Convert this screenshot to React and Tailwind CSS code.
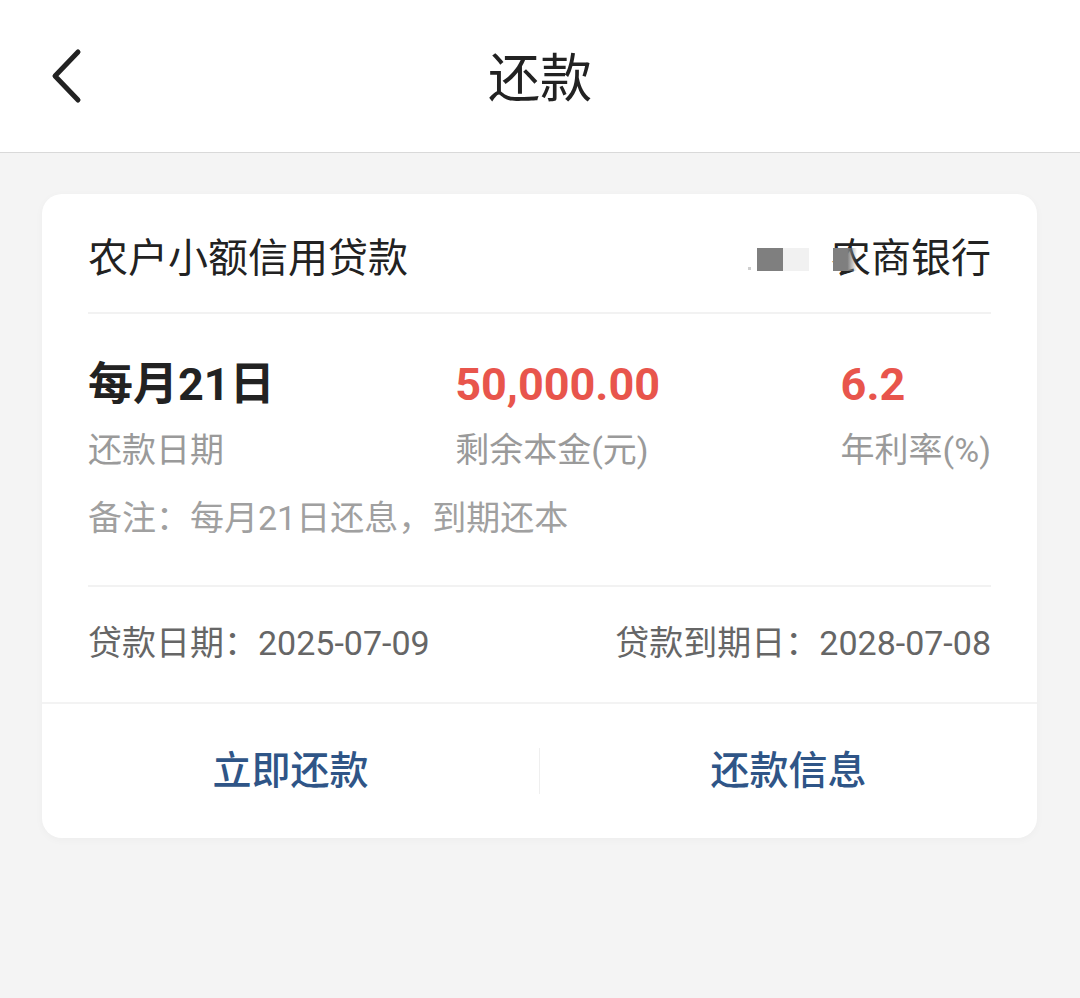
import React from 'react';

const font = { fontFamily: 'Roboto, "Noto Sans CJK SC", sans-serif' };

function BackIcon() {
    return (
        <svg width="36" height="56" viewBox="0 0 36 56" fill="none">
            <path d="M30 4 L7 28 L30 52" stroke="#222" strokeWidth="5" strokeLinecap="round" strokeLinejoin="round" />
        </svg>
    );
}

function BankName() {
    // masked bank name, as in the screenshot
    return (
        <div className="flex items-center">
            <span className="w-[3px] h-[3px] bg-[#cfcfcf] mr-[6px] mt-[18px]" />
            <span className="w-[26px] h-[23px] bg-[#7f7f7f]" />
            <span className="w-[26px] h-[23px] bg-[#f1f1f1]" />
            <span className="relative ml-[22px] text-[40px] leading-[52px] text-[#222]">
                <span className="absolute left-[2px] top-[15px] w-[24px] h-[23px] bg-gradient-to-r from-[#7f7f7f] from-60% to-transparent" />
                农商银行
            </span>
        </div>
    );
}

export default function App() {
    return (
        <div className="min-h-[998px] bg-[#f4f4f4]" style={font}>
            {/* Header */}
            <div className="h-[153px] bg-white border-b border-[#d9d9d9] grid grid-cols-[1fr_auto_1fr] items-center px-[48px]">
                <div className="flex items-center">
                    <BackIcon />
                </div>
                <div className="text-[52px] leading-none text-[#222] pt-[8px]">还款</div>
                <div />
            </div>

            {/* Loan card */}
            <div className="mt-[41px] ml-[42px] w-[995px] bg-white rounded-[20px] shadow-[0_2px_8px_rgba(0,0,0,0.03)]">
                <div className="px-[46px]">
                    <div className="h-[118px] pt-[12px] flex items-center justify-between">
                        <span className="text-[40px] leading-[52px] text-[#222]">农户小额信用贷款</span>
                        <BankName />
                    </div>
                    <div className="h-[2px] bg-[#f2f2f2]" />

                    <div className="pt-[43px] pb-[47px]">
                        <div className="flex justify-between">
                            <div className="flex flex-col">
                                <span className="text-[45px] leading-[56px] font-bold text-[#222]">每月21日</span>
                                <span className="mt-[15px] text-[34px] leading-[44px] text-[#9a9a9a]">还款日期</span>
                            </div>
                            <div className="flex flex-col">
                                <span className="text-[45px] leading-[56px] font-bold text-[#e8554c]">50,000.00</span>
                                <span className="mt-[15px] text-[34px] leading-[44px] text-[#9a9a9a]">剩余本金(元)</span>
                            </div>
                            <div className="flex flex-col">
                                <span className="text-[45px] leading-[56px] font-bold text-[#e8554c]">6.2</span>
                                <span className="mt-[15px] text-[34px] leading-[44px] text-[#9a9a9a]">年利率(%)</span>
                            </div>
                        </div>
                        <div className="mt-[26px] text-[34px] leading-[40px] text-[#a0a0a0]">备注：每月21日还息，到期还本</div>
                    </div>
                    <div className="h-[2px] bg-[#f2f2f2]" />

                    <div className="pt-[34px] pb-[37px] flex justify-between text-[34px] leading-[44px] text-[#666]">
                        <span>贷款日期：2025-07-09</span>
                        <span>贷款到期日：2028-07-08</span>
                    </div>
                </div>
                <div className="h-[2px] bg-[#f3f3f3]" />

                <div className="h-[134px] flex items-center">
                    <button className="flex-1 text-[39px] leading-[50px] font-medium text-[#2f5587]">立即还款</button>
                    <span className="w-px h-[46px] bg-[#efefef]" />
                    <button className="flex-1 text-[39px] leading-[50px] font-medium text-[#2f5587]">还款信息</button>
                </div>
            </div>
        </div>
    );
}
